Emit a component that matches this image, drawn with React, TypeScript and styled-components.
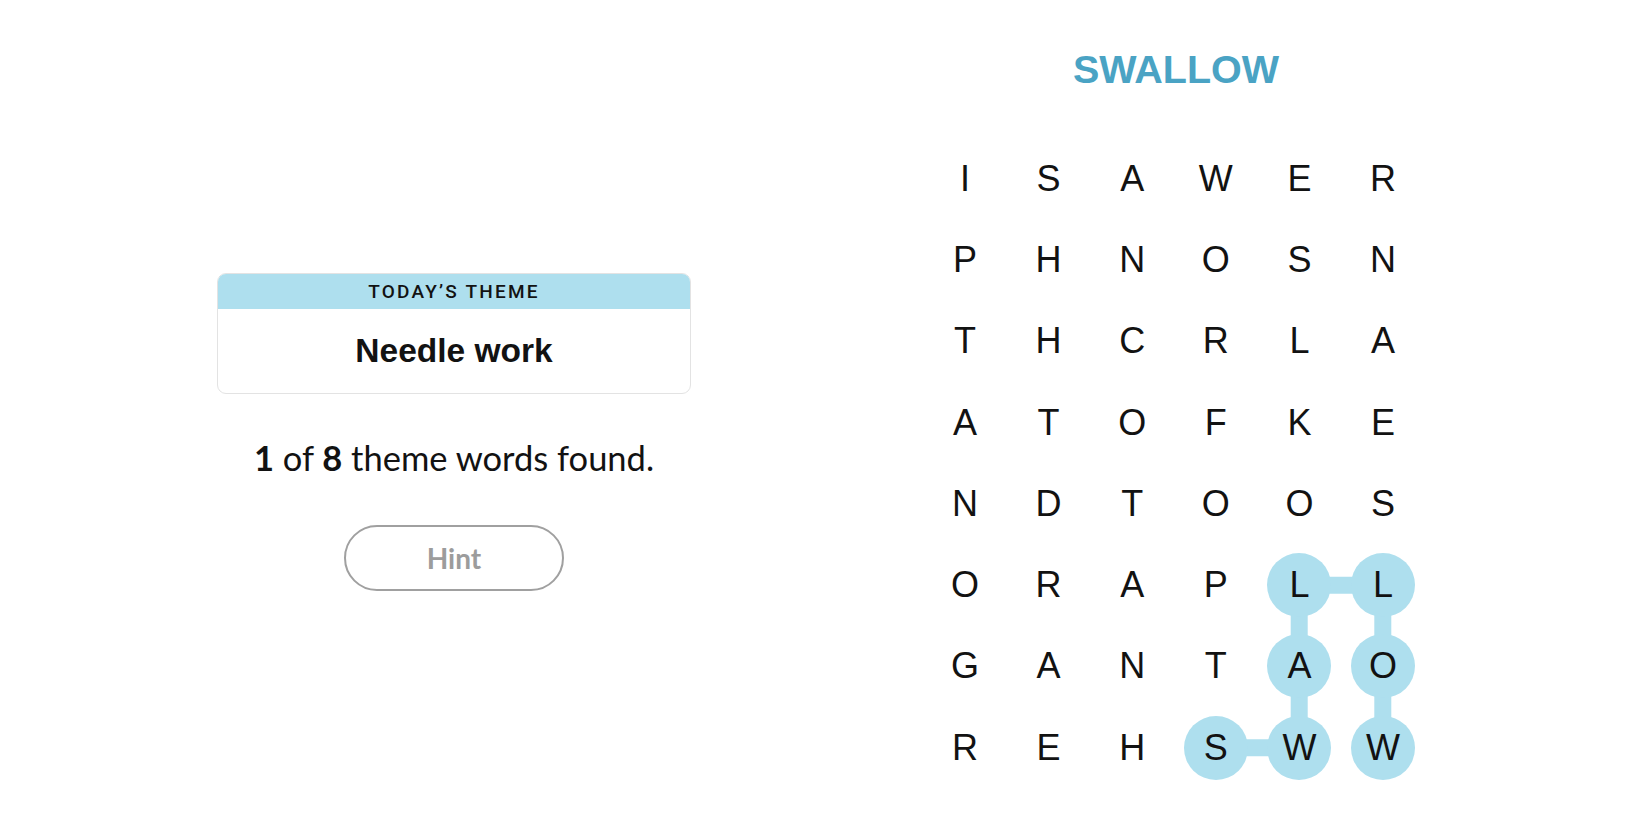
import React from "react";
import styled, { createGlobalStyle } from "styled-components";

const GlobalStyle = createGlobalStyle`
  html, body { margin: 0; padding: 0; background: #ffffff; }
  body { font-family: "Liberation Sans", Arial, sans-serif; color: #121212; }
`;

const CELL_W = 83.6;
const CELL_H = 81.3;
const HILITE = "#aedfee";

const Page = styled.main`
  display: flex;
  width: 1650px;
  height: 825px;
  overflow: hidden;
`;

const LeftColumn = styled.section`
  width: 908px;
  display: flex;
  flex-direction: column;
  align-items: center;
  padding-top: 273px;
  box-sizing: border-box;
`;

const ThemeCard = styled.div`
  width: 474px;
  border: 1px solid #e3e3e3;
  border-radius: 9px;
  overflow: hidden;
  box-sizing: border-box;
`;

const ThemeHeader = styled.div`
  height: 35px;
  background: ${HILITE};
  display: flex;
  align-items: center;
  justify-content: center;
  font-family: "Roboto", "Liberation Sans", sans-serif;
  font-weight: 500;
  font-size: 19px;
  letter-spacing: 2.2px;
  color: #121212;
  text-transform: uppercase;
`;

const ThemeBody = styled.div`
  height: 84px;
  display: flex;
  align-items: center;
  justify-content: center;
  font-family: "Liberation Sans", Arial, sans-serif;
  font-weight: 700;
  font-size: 33.5px;
  color: #121212;
`;

const Progress = styled.p`
  margin: 43px 0 0;
  font-family: "Lato", sans-serif;
  font-size: 34.5px;
  line-height: 42px;
  color: #121212;
  b { font-weight: 700; }
`;

const HintButton = styled.button`
  margin-top: 46px;
  width: 220px;
  height: 66px;
  border-radius: 33px;
  border: 2.5px solid #a0a0a0;
  background: #ffffff;
  font-family: "Lato", sans-serif;
  font-weight: 700;
  font-size: 28px;
  color: #9c9c9c;
  cursor: default;
`;

const RightColumn = styled.section`
  width: 532px;
  display: flex;
  flex-direction: column;
  align-items: center;
  padding-top: 47px;
  box-sizing: border-box;
`;

const CurrentWord = styled.h1`
  margin: 0;
  font-family: "Liberation Sans", Arial, sans-serif;
  font-weight: 700;
  font-size: 39.5px;
  line-height: 44px;
  color: #4aa3c4;
  padding-left: 4px;
`;

const Board = styled.div`
  position: relative;
  margin-top: 47px;
  display: grid;
  grid-template-columns: repeat(6, ${CELL_W}px);
  grid-auto-rows: ${CELL_H}px;
`;

const Connectors = styled.svg`
  position: absolute;
  inset: 0;
  width: 100%;
  height: 100%;
  z-index: 0;
  pointer-events: none;
`;

const Cell = styled.div`
  position: relative;
  z-index: 1;
  display: flex;
  align-items: center;
  justify-content: center;
`;

const Letter = styled.span<{ $selected: boolean }>`
  width: 64px;
  height: 64px;
  border-radius: 50%;
  display: flex;
  align-items: center;
  justify-content: center;
  background: ${(p) => (p.$selected ? HILITE : "transparent")};
  font-family: "Liberation Sans", Arial, sans-serif;
  font-size: 36px;
  line-height: 1;
  color: #121212;
`;

const rows = [
  "ISAWER",
  "PHNOSN",
  "THCRLA",
  "ATOFKE",
  "NDTOOS",
  "ORAPLL",
  "GANTAO",
  "REHSWW",
];

// path of SWALLOW: [row, col]
const path: [number, number][] = [
  [7, 3],
  [7, 4],
  [6, 4],
  [5, 4],
  [5, 5],
  [6, 5],
  [7, 5],
];

const isSelected = (r: number, c: number) =>
  path.some(([pr, pc]) => pr === r && pc === c);

const cx = (c: number) => c * CELL_W + CELL_W / 2;
const cy = (r: number) => r * CELL_H + CELL_H / 2;

export default function App() {
  return (
    <>
      <GlobalStyle />
      <Page>
        <LeftColumn>
          <ThemeCard>
            <ThemeHeader>Today’s Theme</ThemeHeader>
            <ThemeBody>Needle work</ThemeBody>
          </ThemeCard>
          <Progress>
            <b>1</b> of <b>8</b> theme words found.
          </Progress>
          <HintButton>Hint</HintButton>
        </LeftColumn>
        <RightColumn>
          <CurrentWord>SWALLOW</CurrentWord>
          <Board>
            <Connectors>
              {path.slice(1).map(([r, c], i) => {
                const [pr, pc] = path[i];
                return (
                  <line
                    key={i}
                    x1={cx(pc)}
                    y1={cy(pr)}
                    x2={cx(c)}
                    y2={cy(r)}
                    stroke={HILITE}
                    strokeWidth={17}
                  />
                );
              })}
            </Connectors>
            {rows.map((row, r) =>
              row.split("").map((ch, c) => (
                <Cell key={`${r}-${c}`}>
                  <Letter $selected={isSelected(r, c)}>{ch}</Letter>
                </Cell>
              ))
            )}
          </Board>
        </RightColumn>
      </Page>
    </>
  );
}
